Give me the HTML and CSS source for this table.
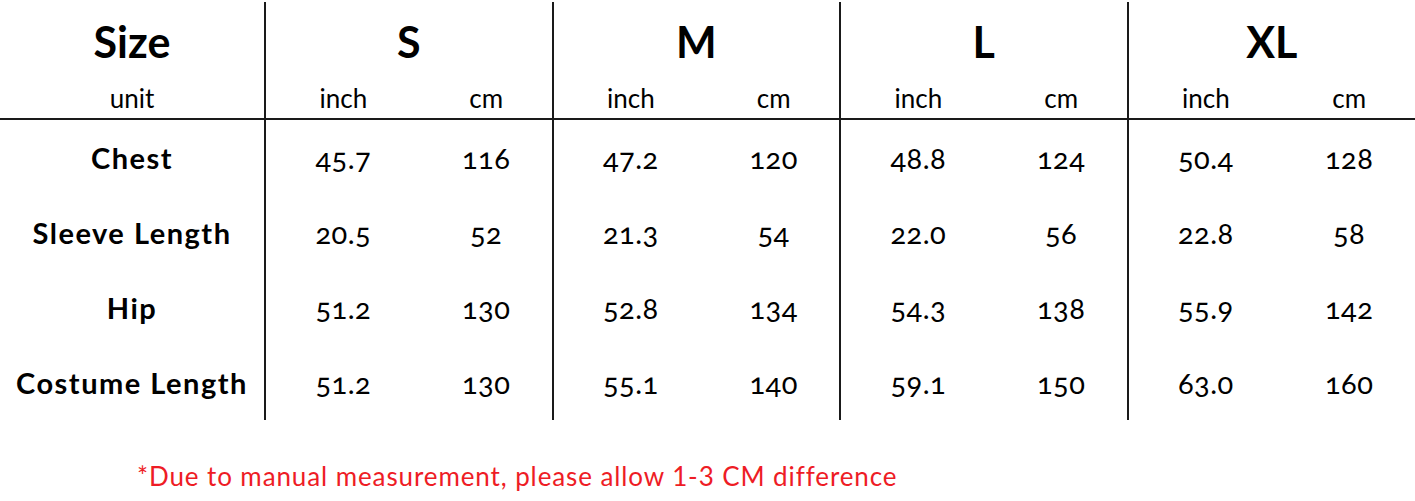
FILE: index.html
```html
<!DOCTYPE html>
<html lang="en">
<head>
  <meta charset="UTF-8">
  <title>Size Chart</title>
  <link rel="stylesheet" href="styles.css">
</head>
<body>
  <table class="size-table">
    <colgroup>
      <col class="col-label">
      <col class="col-sub"><col class="col-sub">
      <col class="col-sub"><col class="col-sub">
      <col class="col-sub"><col class="col-sub">
      <col class="col-sub"><col class="col-sub">
    </colgroup>
    <thead>
      <tr class="size-row">
        <th>Size</th>
        <th colspan="2" class="block">S</th>
        <th colspan="2" class="block">M</th>
        <th colspan="2" class="block">L</th>
        <th colspan="2" class="block">XL</th>
      </tr>
      <tr class="unit-row">
        <td>unit</td>
        <td class="block">inch</td><td>cm</td>
        <td class="block">inch</td><td>cm</td>
        <td class="block">inch</td><td>cm</td>
        <td class="block">inch</td><td>cm</td>
      </tr>
    </thead>
    <tbody>
      <!-- rows filled in below -->
    </tbody>
  </table>

  <p class="note">*Due to manual measurement, please allow 1-3 CM difference</p>

  <script>
    const rows = [
      ['Chest', ['45.7', '116'], ['47.2', '120'], ['48.8', '124'], ['50.4', '128']],
      ['Sleeve Length', ['20.5', '52'], ['21.3', '54'], ['22.0', '56'], ['22.8', '58']],
      ['Hip', ['51.2', '130'], ['52.8', '134'], ['54.3', '138'], ['55.9', '142']],
      ['Costume Length', ['51.2', '130'], ['55.1', '140'], ['59.1', '150'], ['63.0', '160']]
    ];

    const tbody = document.querySelector('.size-table tbody');
    rows.forEach(row => {
      const tr = document.createElement('tr');
      let html = `<th>${row[0]}</th>`;
      row.slice(1).forEach(pair => {
        html += `<td class="block">${pair[0]}</td><td>${pair[1]}</td>`;
      });
      tr.innerHTML = html;
      tbody.appendChild(tr);
    });
  </script>
</body>
</html>
```

FILE: styles.css
```css
/* Size chart */
body {
  margin: 0;
  background-color: #fff;
  color: #000;
  font-family: Lato, "Open Sans", sans-serif;
}

.size-table {
  width: 1415px;
  margin-top: 2px;
  border-collapse: collapse;
  table-layout: fixed;
}

.col-label {
  width: 265px;
}

.size-table th,
.size-table td {
  padding: 0 0 0 12px;
  text-align: center;
  white-space: nowrap;
}

.size-table th:first-child,
.size-table td:first-child {
  padding: 0;
}

.size-table .block {
  border-left: 2px solid #1a1a1a;
}

.size-row th {
  height: 78px;
  padding: 0;
  font-size: 43px;
  font-weight: bold;
  vertical-align: middle;
}

.unit-row td {
  height: 35px;
  padding-top: 3px;
  font-size: 26px;
  line-height: 31px;
  vertical-align: top;
  border-bottom: 2px solid #1a1a1a;
}

.unit-row td:first-child {
  padding-top: 3px;
}

.size-table tbody th,
.size-table tbody td {
  height: 75px;
  font-size: 29px;
  letter-spacing: 0.5px;
  font-variant-numeric: oldstyle-nums;
}

.size-table tbody th {
  font-weight: bold;
  letter-spacing: 1.5px;
}

.note {
  margin: 40px 0 0 137px;
  font-size: 26px;
  letter-spacing: 0.9px;
  color: #ee1c25;
}
```
